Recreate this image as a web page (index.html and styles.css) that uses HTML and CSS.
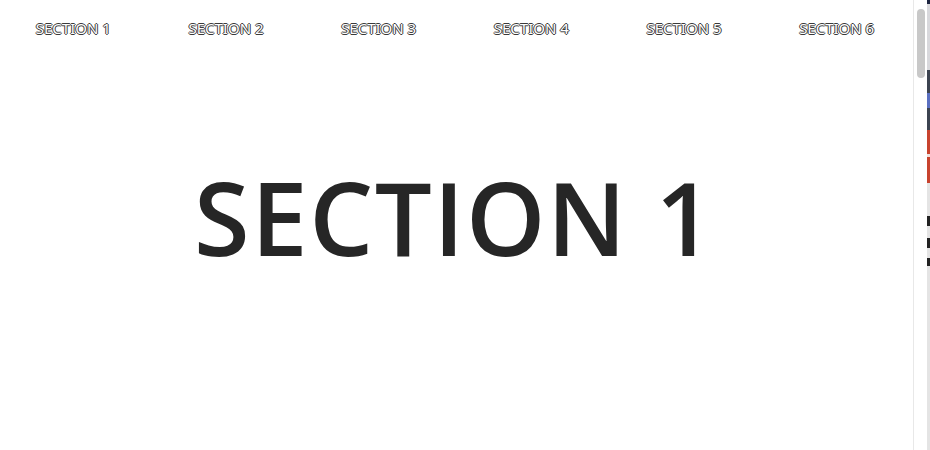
FILE: index.html
```html
<!DOCTYPE html>
<html lang="en">
<head>
<meta charset="utf-8">
<title>Sections</title>
<link rel="stylesheet" href="styles.css">
</head>
<body>
<div class="page">
  <nav class="nav">
    <a class="nav-link" href="#s1">Section 1</a>
    <a class="nav-link" href="#s2">Section 2</a>
    <a class="nav-link" href="#s3">Section 3</a>
    <a class="nav-link" href="#s4">Section 4</a>
    <a class="nav-link" href="#s5">Section 5</a>
    <a class="nav-link" href="#s6">Section 6</a>
  </nav>
  <section class="hero" id="s1">
    <h1 class="hero-title">SECTION 1</h1>
  </section>
</div>
<div class="scrollbar"><div class="thumb"></div></div>
<div class="edge"></div>
</body>
</html>
```
FILE: styles.css
```css
html, body {
  margin: 0;
  padding: 0;
  overflow: hidden;
  background: #fff;
}
body {
  font-family: "Open Sans", "Noto Sans", sans-serif;
  width: 930px;
  height: 450px;
}
.page {
  width: 913px;
  height: 450px;
}
.nav {
  display: grid;
  grid-template-columns: repeat(6, 1fr);
  margin-left: -3px;
  padding-top: 18px;
  height: 38px;
}
.nav-link {
  font-family: "Noto Sans", "Open Sans", sans-serif;
  text-align: center;
  text-transform: uppercase;
  text-decoration: none;
  font-size: 15px;
  font-weight: 400;
  line-height: 20px;
  color: #fff;
  text-shadow:
    1px 0 0 #3a3a3a, -1px 0 0 #3a3a3a, 0 1px 0 #3a3a3a, 0 -1px 0 #3a3a3a;
}
.hero {
  display: flex;
  justify-content: center;
  padding-top: 111px;
  padding-right: 4px;
}
.hero-title {
  margin: 0;
  font-size: 101px;
  font-weight: 600;
  line-height: 1;
  color: #262626;
  letter-spacing: 1.6px;
}
.scrollbar {
  position: fixed;
  top: 0;
  left: 913px;
  width: 14px;
  height: 450px;
  border-left: 1px solid #e8e8e8;
  background: #fff;
  box-sizing: border-box;
}
.thumb {
  margin: 9px 0 0 3px;
  width: 8px;
  height: 69px;
  border-radius: 4px;
  background: #c8c8c8;
}
.edge {
  position: fixed;
  top: 0;
  left: 927px;
  width: 3px;
  height: 450px;
  background: linear-gradient(to bottom,
    #1c2440 0, #1c2440 4px,
    #d8d8dc 4px, #d8d8dc 70px,
    #3c4350 70px, #3c4350 93px,
    #5a6fc0 93px, #5a6fc0 108px,
    #3c4350 108px, #3c4350 130px,
    #c8432e 130px, #c8432e 154px,
    #f0e0dc 154px, #f0e0dc 157px,
    #c8432e 157px, #c8432e 183px,
    #e4e4e4 183px, #e4e4e4 216px,
    #222 216px, #222 226px,
    #e4e4e4 226px, #e4e4e4 238px,
    #222 238px, #222 248px,
    #e4e4e4 248px, #e4e4e4 258px,
    #222 258px, #222 266px,
    #e4e4e4 266px, #e4e4e4 450px);
}
```
